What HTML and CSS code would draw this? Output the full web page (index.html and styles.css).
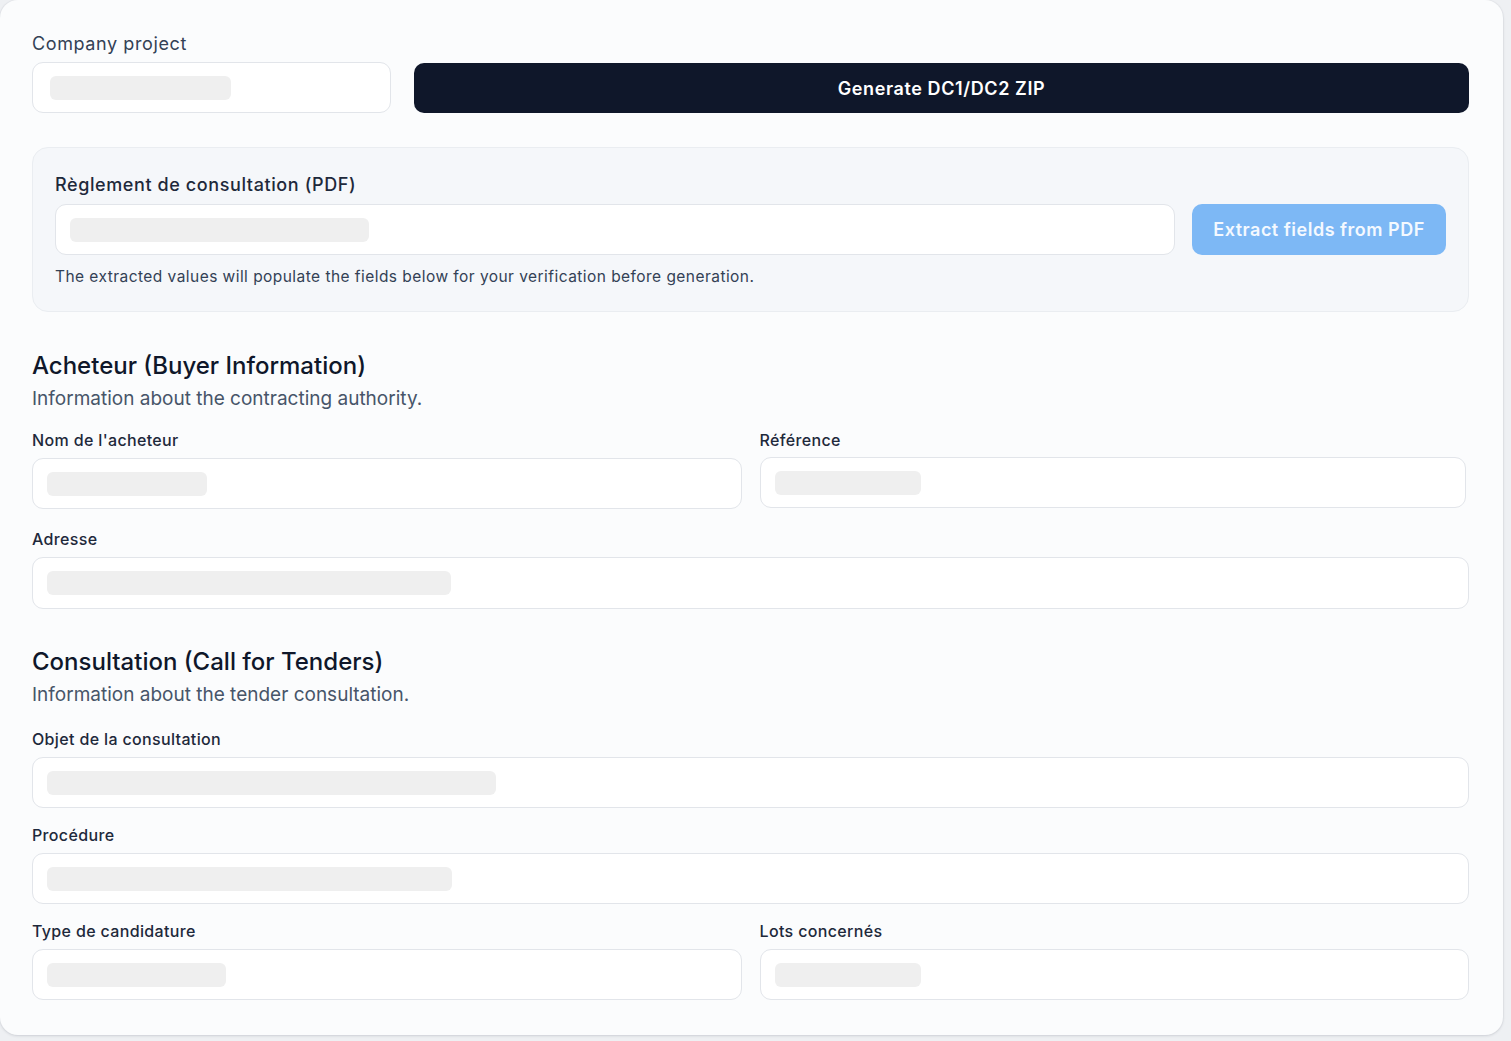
FILE: index.html
```html
<!DOCTYPE html>
<html lang="fr">
<head>
<meta charset="utf-8">
<title>DC1/DC2</title>
<link rel="stylesheet" href="styles.css">
</head>
<body>
<div class="card">
  <div class="top-row">
    <div class="project-field">
      <label class="project-label">Company project</label>
      <div class="input"><span class="skel" style="width:181px"></span></div>
    </div>
    <button class="btn-dark">Generate DC1/DC2 ZIP</button>
  </div>

  <div class="pdf-panel">
    <label class="pdf-label">Règlement de consultation (PDF)</label>
    <div class="pdf-row">
      <div class="input pdf-input"><span class="skel skel-pdf" style="width:299px"></span></div>
      <button class="btn-blue">Extract fields from PDF</button>
    </div>
    <p class="helper">The extracted values will populate the fields below for your verification before generation.</p>
  </div>

  <section class="section s1">
    <h2>Acheteur (Buyer Information)</h2>
    <p class="sub">Information about the contracting authority.</p>
    <div class="grid2">
      <div class="field">
        <label>Nom de l'acheteur</label>
        <div class="input"><span class="skel" style="width:160px"></span></div>
      </div>
      <div class="field">
        <label>Référence</label>
        <div class="input input-ref"><span class="skel" style="width:146px"></span></div>
      </div>
    </div>
    <div class="field mt19">
      <label>Adresse</label>
      <div class="input tall"><span class="skel" style="width:404px"></span></div>
    </div>
  </section>

  <section class="section s2">
    <h2>Consultation (Call for Tenders)</h2>
    <p class="sub">Information about the tender consultation.</p>
    <div class="field mt20">
      <label>Objet de la consultation</label>
      <div class="input"><span class="skel" style="width:449px"></span></div>
    </div>
    <div class="field mt16">
      <label>Procédure</label>
      <div class="input"><span class="skel" style="width:405px"></span></div>
    </div>
    <div class="grid2 mt16">
      <div class="field">
        <label>Type de candidature</label>
        <div class="input"><span class="skel" style="width:179px"></span></div>
      </div>
      <div class="field">
        <label>Lots concernés</label>
        <div class="input"><span class="skel" style="width:146px"></span></div>
      </div>
    </div>
  </section>
</div>
</body>
</html>
```

FILE: styles.css
```css
* { box-sizing: border-box; }
html, body { margin: 0; padding: 0; }
body {
  background: #eef0f3;
  font-family: Inter, "Noto Sans", "Liberation Sans", sans-serif;
  color: #1e293b;
  width: 1511px;
  height: 1041px;
  overflow: hidden;
}
.card {
  width: 1503px;
  height: 1035px;
  background: #fbfcfd;
  border-radius: 18px;
  box-shadow: 0 1px 3px rgba(15, 23, 42, 0.12), 0 0 0 1px #e8eaee;
  padding: 30px 34px 0 32px;
}
.top-row {
  display: flex;
  align-items: flex-end;
  gap: 23px;
}
.project-field { width: 359px; display: flex; flex-direction: column; }
.project-label {
  font-size: 18px;
  line-height: 28px;
  color: #334155;
  letter-spacing: 0.6px;
  margin-bottom: 4px;
}
.input {
  height: 51px;
  background: #fff;
  border: 1px solid #e2e5ea;
  border-radius: 11px;
  display: flex;
  align-items: center;
  padding-left: 14px;
}
.skel {
  display: block;
  height: 24px;
  background: #efefef;
  border-radius: 6px;
}
.project-field .skel { margin-left: 3px; }
.btn-dark {
  flex: 1;
  height: 50px;
  background: #0f172a;
  color: #fff;
  border: none;
  border-radius: 10px;
  font-family: inherit;
  font-size: 18px;
  font-weight: 600;
  letter-spacing: 0.6px;
}
.pdf-panel {
  margin-top: 34px;
  background: #f5f7fa;
  border: 1px solid #eaedf1;
  border-radius: 16px;
  padding: 25px 22px 24px 22px;
}
.pdf-label {
  display: block;
  font-size: 18px;
  line-height: 24px;
  font-weight: 500;
  color: #1e293b;
  letter-spacing: 0.6px;
}
.pdf-row {
  display: flex;
  gap: 17px;
  margin-top: 7px;
}
.pdf-input { flex: 1; }
.skel-pdf { margin-left: 0; }
.btn-blue {
  width: 254px;
  height: 51px;
  background: #7db8f5;
  color: #f4f9ff;
  border: none;
  border-radius: 10px;
  font-family: inherit;
  font-size: 18px;
  font-weight: 600;
  letter-spacing: 0.5px;
}
.helper {
  margin: 12px 0 0;
  font-size: 15.5px;
  line-height: 20px;
  color: #334155;
  letter-spacing: 0.45px;
}
.section h2 {
  margin: 0;
  font-size: 24px;
  line-height: 32px;
  font-weight: 500;
  color: #0f172a;
  letter-spacing: 0;
}
.s1 { margin-top: 38px; }
.s2 { margin-top: 37px; }
.sub {
  margin: 4px 0 0;
  font-size: 19px;
  line-height: 26px;
  color: #475569;
}
.grid2 {
  display: grid;
  grid-template-columns: 1fr 1fr;
  column-gap: 18px;
}
.s1 .grid2 { margin-top: 17px; }
.field { display: flex; flex-direction: column; }
.field label {
  font-size: 16px;
  line-height: 22px;
  font-weight: 500;
  color: #1e293b;
  letter-spacing: 0.35px;
  margin-bottom: 7px;
}
.input-ref { margin-top: -1px; margin-right: 3px; }
.tall { height: 52px; }
.mt19 { margin-top: 19px; }
.mt20 { margin-top: 20px; }
.mt16 { margin-top: 16px; }
```
